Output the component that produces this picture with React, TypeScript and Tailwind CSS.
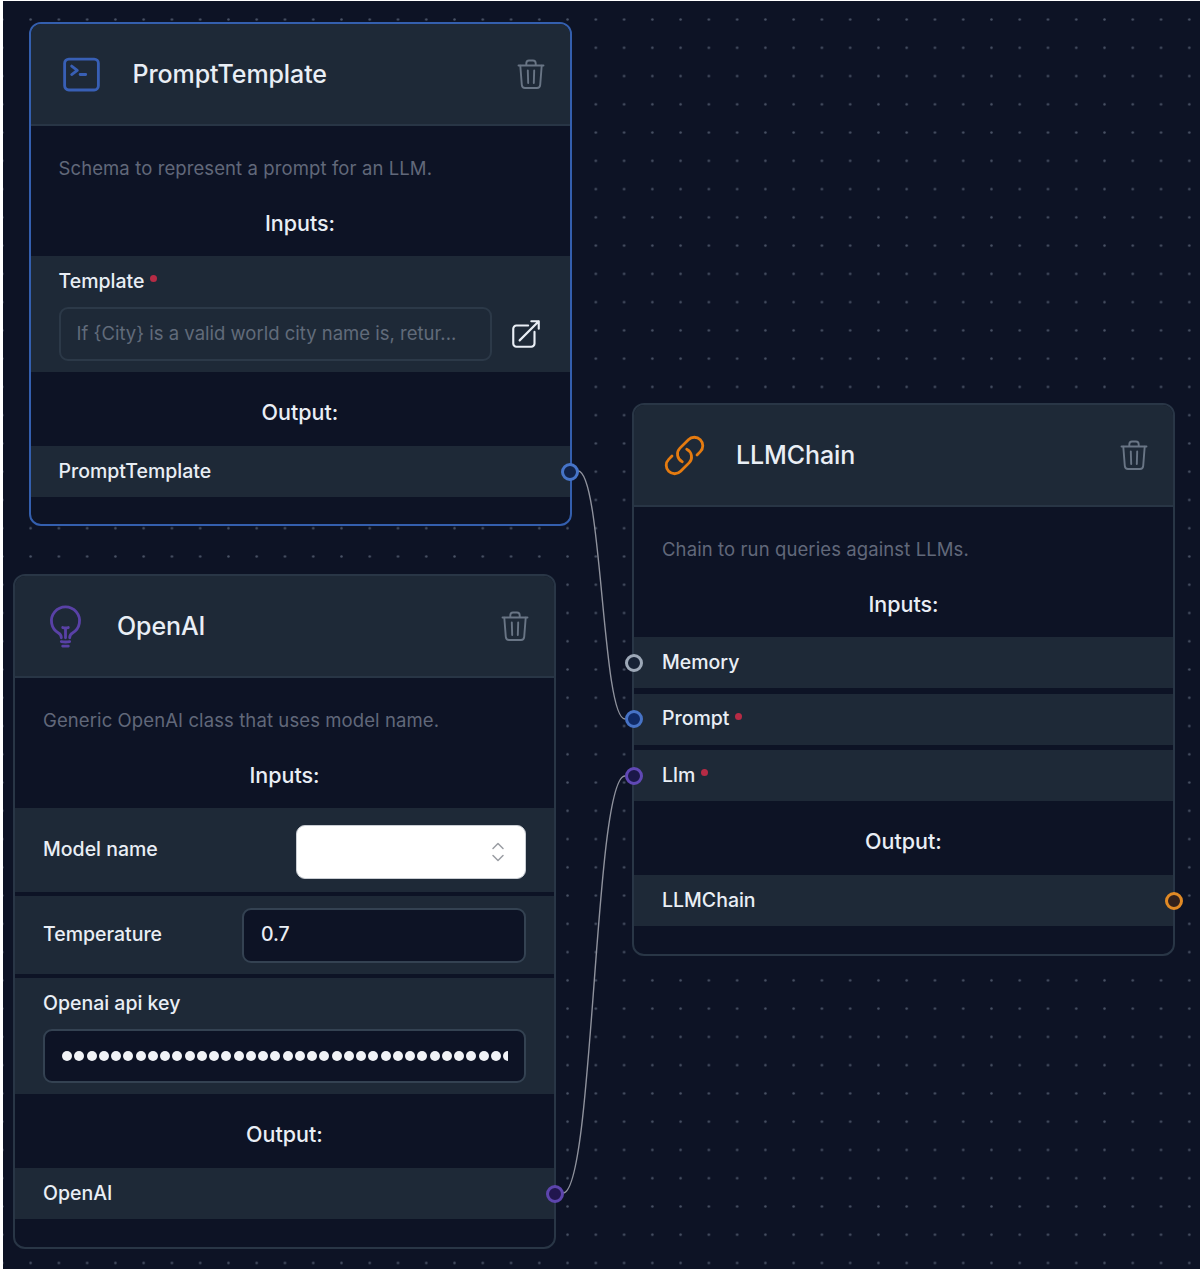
import type { ReactNode } from "react";
import {
  HiOutlineCommandLine,
  HiOutlineLightBulb,
  HiOutlineLink,
  HiOutlineArrowTopRightOnSquare,
} from "react-icons/hi2";

function TrashIcon() {
  return (
    <svg viewBox="0 0 28 32" className="h-8 w-7 text-[#697585]" fill="none" stroke="currentColor" strokeWidth="1.9" strokeLinecap="round" strokeLinejoin="round">
      <path d="M1.5 7.5h25M9.3 7.2V5.4c0-1.900.9-2.900 2.700-2.900h4c1.800 0 2.700 1 2.700 2.900v1.800" />
      <path d="M3.300 7.700l1.500 19.200c.2 2 1.200 3.100 3.200 3.100h12c2 0 3-1.100 3.200-3.100l1.500-19.200" />
      <path d="M10.800 12.400l.4 12.600M17.200 12.400l-.4 12.600" />
    </svg>
  );
}

function Selector() {
  return (
    <svg viewBox="0 0 14 20" className="h-5 w-3.5 text-[#9a9da3]" fill="none" stroke="currentColor" strokeWidth="1.5" strokeLinecap="round" strokeLinejoin="round">
      <path d="M2 6.500l5-5 5 5M2 13.500l5 5 5-5" />
    </svg>
  );
}

function Handle({ side, color }: { side: "left" | "right"; color: string }) {
  const place = side === "left" ? "-left-[9.500px]" : "-right-[9.500px]";
  return <span className={`absolute top-1/2 z-10 size-[18px] -translate-y-1/2 rounded-full border-[3px] ${place} ${color}`} />;
}

function Card({ place, border, icon, title, description, children }: {
  place: string;
  border: string;
  icon: ReactNode;
  title: string;
  description: string;
  children: ReactNode;
}) {
  return (
    <section className={`absolute flex w-[543px] flex-col rounded-[12px] border-2 bg-[#0d1325] ${place} ${border}`}>
      <header className="flex h-[102px] shrink-0 items-center rounded-t-[10px] border-b-2 border-[#283545] bg-[#1e2937] pr-[25px] pl-7">
        <span className="flex w-[45px] justify-center">{icon}</span>
        <h2 className="ml-[29px] flex-1 text-[25px] leading-9 font-medium tracking-[-0.1px]">{title}</h2>
        <TrashIcon />
      </header>
      <p className="mt-[28px] pl-7 text-[18.500px] leading-7 tracking-[0.1px] text-[#61687a]">{description}</p>
      {children}
    </section>
  );
}

function Heading({ children, className }: { children: ReactNode; className: string }) {
  return <h3 className={`shrink-0 text-center text-[21.500px] leading-8 font-medium ${className}`}>{children}</h3>;
}

function PortRow({ label, required, handle, className = "" }: { label: string; required?: boolean; handle: ReactNode; className?: string }) {
  return (
    <div className={`relative flex h-[51px] shrink-0 items-center bg-[#1e2937] pl-7 text-[19.500px] font-medium ${className}`}>
      {label}
      {required && <Star />}
      {handle}
    </div>
  );
}

function Star() {
  return <span className="ml-1.5 size-[7px] -translate-y-[3px] rounded-full bg-[#b62b45]" />;
}

export default function App() {
  return (
    <main className="h-[1272px] w-[1203px] bg-white pt-px pr-[3px] pb-[3px] pl-[3px] font-['Inter',sans-serif] text-[#e9eef5]">
      <div className="relative h-full overflow-hidden bg-[#0d1325]">
        <svg className="absolute inset-0 size-full">
          <defs>
            <pattern id="dots" width="28.260" height="28.260" x="13.500" y="4.400" patternUnits="userSpaceOnUse">
              <circle cx="14.130" cy="14.130" r="1.250" fill="#4a5366" />
            </pattern>
          </defs>
          <rect width="100%" height="100%" fill="url(#dots)" />
        </svg>

        <Card
          place="top-[21px] left-[25.500px] h-[504px]"
          border="border-[#345fae]"
          icon={<HiOutlineCommandLine className="size-[45px] text-[#385fb5]" />}
          title="PromptTemplate"
          description="Schema to represent a prompt for an LLM."
        >
          <Heading className="mt-[25px]">Inputs:</Heading>
          <div className="mt-[17px] h-[116px] shrink-0 bg-[#1e2937] pl-7">
            <label className="flex h-[51px] items-center text-[19.500px] font-medium">Template<Star /></label>
            <div className="flex items-center">
              <div className="flex h-[54px] w-[433px] items-center rounded-[9px] border-2 border-[#2c3948] pl-4 text-[18.500px] text-[#616b7a]">
                If {"{City}"} is a valid world city name is, retur...
              </div>
              <HiOutlineArrowTopRightOnSquare className="ml-[17px] size-[34px]" />
            </div>
          </div>
          <Heading className="mt-[24px]">Output:</Heading>
          <PortRow className="mt-[18px]" label="PromptTemplate" handle={<Handle side="right" color="border-[#4674c8] bg-[#112247]" />} />
        </Card>

        <Card
          place="top-[573px] left-[10px] h-[675px]"
          border="border-[#293646]"
          icon={<HiOutlineLightBulb className="size-[45px] text-[#5941a6]" />}
          title="OpenAI"
          description="Generic OpenAI class that uses model name."
        >
          <Heading className="mt-[25px]">Inputs:</Heading>
          <div className="mt-[17px] flex h-[84px] shrink-0 items-center justify-between bg-[#1e2937] pr-7 pl-7">
            <span className="text-[19.500px] font-medium">Model name</span>
            <div className="mt-1 flex h-[54px] w-[230px] items-center justify-end rounded-[9px] border border-[#c9cdd3] bg-white pr-5"><Selector /></div>
          </div>
          <div className="mt-1 flex h-[78px] shrink-0 items-center justify-between bg-[#1e2937] pr-7 pl-7">
            <span className="text-[19.500px] font-medium">Temperature</span>
            <div className="flex h-[55px] w-[284px] items-center rounded-[9px] border-2 border-[#344252] bg-[#0d1325] pl-[17px] text-[19.500px] font-medium">0.7</div>
          </div>
          <div className="mt-1 h-[116px] shrink-0 bg-[#1e2937] px-7">
            <label className="flex h-[51px] items-center text-[19.500px] font-medium">Openai api key</label>
            <div className="flex h-[54px] items-center rounded-[9px] border-2 border-[#344252] bg-[#0d1325] px-4">
              <div className="flex w-full gap-[2.260px] overflow-hidden pl-px">
                {Array.from({ length: 37 }, (_, i) => (
                  <span key={i} className="size-[10px] shrink-0 rounded-full bg-[#f1f3f7]" />
                ))}
              </div>
            </div>
          </div>
          <Heading className="mt-[24px]">Output:</Heading>
          <PortRow className="mt-[18px]" label="OpenAI" handle={<Handle side="right" color="border-[#5d45ad] bg-[#21164e]" />} />
        </Card>

        <Card
          place="top-[402px] left-[629px] h-[553px]"
          border="border-[#293646]"
          icon={<HiOutlineLink className="size-[45px] text-[#e57b10]" />}
          title="LLMChain"
          description="Chain to run queries against LLMs."
        >
          <Heading className="mt-[25px]">Inputs:</Heading>
          <PortRow className="mt-[17px]" label="Memory" handle={<Handle side="left" color="border-[#9da8b7] bg-[#172235]" />} />
          <PortRow className="mt-[5.500px]" label="Prompt" required handle={<Handle side="left" color="border-[#4773c6] bg-[#102a66]" />} />
          <PortRow className="mt-[5.500px]" label="Llm" required handle={<Handle side="left" color="border-[#6048b4] bg-[#1b1849]" />} />
          <Heading className="mt-[24px]">Output:</Heading>
          <PortRow className="mt-[18px]" label="LLMChain" handle={<Handle side="right" color="border-[#e18a25] bg-[#33211c]" />} />
        </Card>

        <svg className="pointer-events-none absolute inset-0 size-full" fill="none" stroke="#8f929d" strokeWidth="1.400">
          <path d="M575 470C599 470 599 718 622 718" />
          <path d="M560 1192C591 1192 591 775 622 775" />
        </svg>
      </div>
    </main>
  );
}
